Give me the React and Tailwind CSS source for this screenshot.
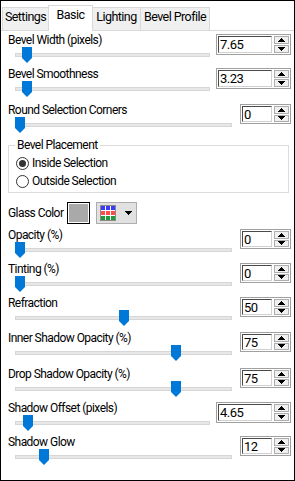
import React from "react";

const F = "font-['Roboto','Liberation_Sans',Arial,sans-serif] tracking-[-0.55px]";

const rowsTop = [
  { label: "Bevel Width (pixels)", value: "7.65", wide: true, thumb: 7, h: "h-[34px]" },
  { label: "Bevel Smoothness", value: "3.23", wide: true, thumb: 7, h: "h-[36px]" },
  { label: "Round Selection Corners", value: "0", wide: false, thumb: 0, h: "h-[34px]" },
];

const rowsBottom = [
  { label: "Opacity (%)", value: "0", wide: false, thumb: 0, h: "h-[34px]" },
  { label: "Tinting (%)", value: "0", wide: false, thumb: 0, h: "h-[34px]" },
  { label: "Refraction", value: "50", wide: false, thumb: 104, h: "h-[35px]" },
  { label: "Inner Shadow Opacity (%)", value: "75", wide: false, thumb: 156, h: "h-[36px]" },
  { label: "Drop Shadow Opacity (%)", value: "75", wide: false, thumb: 156, h: "h-[34px]" },
  { label: "Shadow Offset (pixels)", value: "4.65", wide: true, thumb: 8, h: "h-[34px]" },
  { label: "Shadow Glow", value: "12", wide: false, thumb: 24, h: "h-[34px]" },
];

function Spinner({ value, wide }) {
  return (
    <div
      className={`flex mt-[2px] mr-[3px] ${wide ? "w-[75px] h-[21px]" : "w-[51px] h-[20px]"} border border-[#a0a0a0] bg-white p-px gap-[2px]`}
    >
      <div className="flex-1 flex items-center border border-[#4a4a4a] border-r-[#d0d0d0] border-b-[#d0d0d0] pl-px text-[13px] leading-none text-black">
        {value}
      </div>
      <div className="flex flex-col w-[15px] gap-px">
        <div className="flex-1 flex items-center justify-center bg-[#f0f0f0] border border-[#adadad]">
          <svg width="7" height="4" viewBox="0 0 7 4" shapeRendering="crispEdges">
            <path d="M0 4L3.5 0L7 4Z" fill="#000" />
          </svg>
        </div>
        <div className="flex-1 flex items-center justify-center bg-[#f0f0f0] border border-[#adadad]">
          <svg width="7" height="4" viewBox="0 0 7 4" shapeRendering="crispEdges">
            <path d="M0 0H7L3.5 4Z" fill="#000" />
          </svg>
        </div>
      </div>
    </div>
  );
}

function SliderRow({ label, value, wide, thumb, h }) {
  return (
    <div className={`flex ${h}`}>
      <div className="flex-1 flex flex-col">
        <div className="h-[16px] leading-[16px] pl-[7px] whitespace-nowrap">{label}</div>
        <div className={`relative -mt-px ml-[14px] h-[16px] ${wide ? "w-[195px]" : "w-[217px]"}`}>
          <div className="mt-[6px] h-[4px] bg-[#e7e7e7] border border-[#d6d6d6]" />
          <svg
            width="10"
            height="16"
            viewBox="0 0 10 16"
            className="absolute top-0"
            style={{ left: thumb }}
          >
            <path d="M0 0H10V11L5 16L0 11Z" fill="#0078d7" />
          </svg>
        </div>
      </div>
      <Spinner value={value} wide={wide} />
    </div>
  );
}

function Radio({ checked, label }) {
  return (
    <div className="flex items-center h-[18px]">
      <div className="ml-[7px] w-[13px] h-[13px] rounded-full border border-[#333] bg-white flex items-center justify-center">
        {checked && <div className="w-[7px] h-[7px] rounded-full bg-[#333]" />}
      </div>
      <span className="ml-[3px] leading-[16px]">{label}</span>
    </div>
  );
}

function GridIcon() {
  const colors = ["#3a3aff", "#ff4b4b", "#1f9a3a"];
  return (
    <svg width="16" height="16" viewBox="0 0 16 16" shapeRendering="crispEdges">
      <rect x="0" y="0" width="16" height="16" fill="#ffffff" />
      {colors.map((c, r) =>
        [0, 1, 2].map((col) => (
          <rect key={`${r}-${col}`} x={1 + col * 5} y={1 + r * 5} width="4" height="4" fill={c} />
        ))
      )}
      <rect x="0.5" y="0.5" width="15" height="15" fill="none" stroke="#8a8a8a" />
    </svg>
  );
}

export default function App() {
  return (
    <div className={`w-[295px] h-[481px] border border-black bg-white text-black text-[12px] ${F} overflow-hidden`}>
      {/* Tabs */}
      <div className="flex items-end h-[30px] border-b border-[#d9d9d9] pl-px whitespace-nowrap text-[12.5px]">
        <div className="w-[46px] h-[23px] bg-[#f0f0f0] border-l border-t border-[#d9d9d9] flex justify-center pt-px leading-[16px]">
          Settings
        </div>
        <div className="w-[45px] h-[26px] -mb-px bg-white border-l border-t border-r border-[#d9d9d9] flex justify-center pt-px leading-[16px] relative">
          Basic
        </div>
        <div className="w-[47px] h-[23px] bg-[#f0f0f0] border-t border-[#d9d9d9] flex justify-center pt-px leading-[16px]">
          Lighting
        </div>
        <div className="w-[70px] h-[23px] bg-[#f0f0f0] border-l border-t border-r border-[#d9d9d9] flex justify-center pt-px leading-[16px]">
          Bevel Profile
        </div>
      </div>

      <div className="pt-px">
        {rowsTop.map((r) => (
          <SliderRow key={r.label} {...r} />
        ))}

        <fieldset className="mt-px mx-[7px] w-[281px] border border-[#dcdcdc] pt-px pb-[2px]">
          <legend className="ml-[6px] px-[2px] leading-[16px]">Bevel Placement</legend>
          <Radio checked label="Inside Selection" />
          <Radio label="Outside Selection" />
        </fieldset>

        <div className="flex h-[34px]">
          <div className="w-[59px] ml-[7px] mt-[12px] leading-[16px] h-[16px] whitespace-nowrap">Glass Color</div>
          <div className="mt-[9px] w-[23px] h-[22px] border border-black bg-white p-px">
            <div className="w-full h-full bg-[#a9a9a9]" />
          </div>
          <div className="mt-[9px] ml-[6px] w-[41px] h-[22px] bg-[#e1e1e1] border border-[#adadad] flex items-center pl-[3px]">
            <GridIcon />
            <svg width="7" height="4" viewBox="0 0 7 4" className="ml-[9px]" shapeRendering="crispEdges">
              <path d="M0 0H7L3.5 4Z" fill="#000" />
            </svg>
          </div>
        </div>

        {rowsBottom.map((r) => (
          <SliderRow key={r.label} {...r} />
        ))}
      </div>
    </div>
  );
}
